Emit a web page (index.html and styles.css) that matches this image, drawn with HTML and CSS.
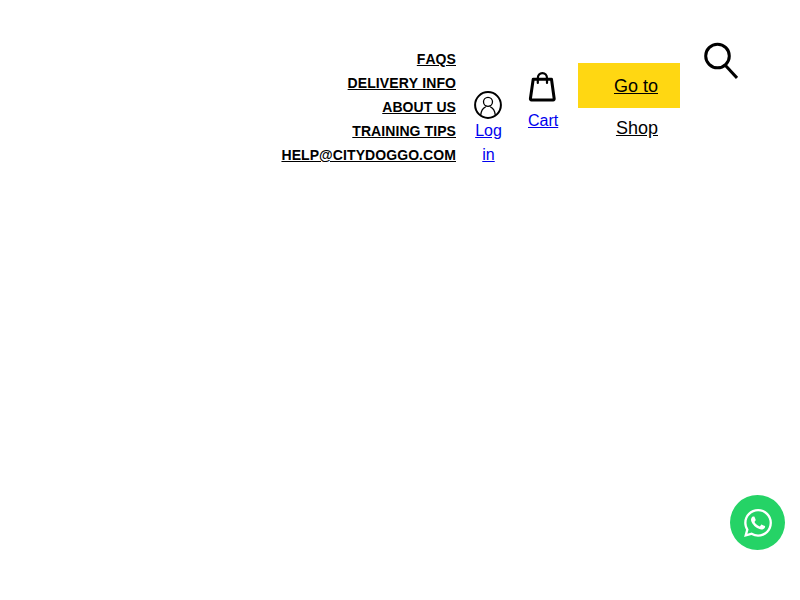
FILE: index.html
```html
<!DOCTYPE html>
<html lang="en">
<head>
<meta charset="utf-8">
<title>City Doggo</title>
<link rel="stylesheet" href="styles.css">
</head>
<body>
<header class="header">
  <ul class="links">
    <li><a href="#">FAQS</a></li>
    <li><a href="#">DELIVERY INFO</a></li>
    <li><a href="#">ABOUT US</a></li>
    <li><a href="#">TRAINING TIPS</a></li>
    <li><a href="#">HELP@CITYDOGGO.COM</a></li>
  </ul>
  <div class="account">
    <svg class="account-icon" viewBox="0 0 28 28" fill="none" stroke="#000">
      <circle cx="14" cy="14" r="12.9" stroke-width="2"/>
      <circle cx="14" cy="10.800" r="4.500" stroke-width="1.300"/>
      <path d="M6.800 23.600c.4-3.800 2.200-6.400 4.600-7.600M21.200 23.600c-.4-3.800-2.200-6.400-4.600-7.600" stroke-width="1.300" stroke-linecap="round"/>
    </svg>
    <a href="#">Log in</a>
  </div>
  <div class="cart">
    <svg class="cart-icon" viewBox="0 0 30 30" fill="none" stroke="#000" stroke-linecap="round" stroke-linejoin="round">
      <path d="M5.200 7.200h18.300l2.700 19.600c.1.700-.3 1.200-1 1.200H3.400c-.7 0-1.100-.5-1-1.200z" stroke-width="3"/>
      <path d="M9.800 11V6.200C9.800 3.200 11.700 1.200 14.400 1.200s4.600 2 4.600 5V11" stroke-width="2.200"/>
    </svg>
    <a href="#">Cart</a>
  </div>
  <div class="shop"><a href="#">Go to Shop</a></div>
  <svg class="search" viewBox="0 0 34 38" fill="none" stroke="#000" stroke-width="3">
    <circle cx="13.500" cy="14" r="11.800"/>
    <path d="M21.500 23.500L33 36" />
  </svg>
</header>
<a class="whatsapp" href="#" aria-label="WhatsApp">
  <svg class="whatsapp-icon" viewBox="0 0 24 24" fill="#fff">
    <path d="M17.472 14.382c-.297-.149-1.758-.867-2.03-.967-.273-.099-.471-.148-.67.15-.197.297-.767.966-.94 1.164-.173.199-.347.223-.644.075-.297-.15-1.255-.463-2.39-1.475-.883-.788-1.48-1.761-1.653-2.059-.173-.297-.018-.458.13-.606.134-.133.298-.347.446-.52.149-.174.198-.298.298-.497.099-.198.05-.371-.025-.52-.075-.149-.669-1.612-.916-2.207-.242-.579-.487-.5-.669-.51-.173-.008-.371-.01-.57-.01-.198 0-.52.074-.792.372-.272.297-1.04 1.016-1.04 2.479 0 1.462 1.065 2.875 1.213 3.074.149.198 2.096 3.2 5.077 4.487.709.306 1.262.489 1.694.625.712.227 1.36.195 1.871.118.571-.085 1.758-.719 2.006-1.413.248-.694.248-1.289.173-1.413-.074-.124-.272-.198-.57-.347m-5.421 7.403h-.004a9.87 9.87 0 01-5.031-1.378l-.361-.214-3.741.982.998-3.648-.235-.374a9.86 9.86 0 01-1.51-5.26c.001-5.45 4.436-9.884 9.888-9.884 2.64 0 5.122 1.03 6.988 2.898a9.825 9.825 0 012.893 6.994c-.003 5.45-4.437 9.884-9.885 9.884m8.413-18.297A11.815 11.815 0 0012.05 0C5.495 0 .16 5.335.157 11.892c0 2.096.547 4.142 1.588 5.945L.057 24l6.305-1.654a11.882 11.882 0 005.683 1.448h.005c6.554 0 11.89-5.335 11.893-11.893a11.821 11.821 0 00-3.48-8.413Z"/>
  </svg>
</a>
</body>
</html>
```
FILE: styles.css
```css
* { box-sizing: border-box; }
html, body { margin: 0; height: 100%; background: #fff; }
body { font-family: "Liberation Sans", Arial, sans-serif; font-size: 16px; line-height: 24px; font-kerning: none; }
svg { display: block; }

.header {
  display: flex;
  align-items: flex-start;
  justify-content: flex-end;
  padding: 42px 62px 0 0;
}

.links {
  list-style: none;
  margin: 5px 18px 0 0;
  padding: 0;
  text-align: right;
  font-size: 14px;
  font-weight: 700;
  letter-spacing: .08px;
}
.links a { color: #000; }

.account {
  width: 29px;
  margin: 49px 25px 0 0;
  text-align: center;
}
.account-icon { width: 28px; height: 28px; }
.account a, .cart a { color: #00e; }

.cart {
  width: 30px;
  margin: 30px 20px 0 0;
  text-align: center;
}
.cart-icon { width: 30px; height: 30px; margin-bottom: 7px; }

.shop {
  width: 102px;
  height: 45px;
  margin: 21px 24px 0 0;
  padding: 2px 22px 0 34px;
  background: #ffd712;
  font-size: 18px;
  line-height: 42px;
  text-align: right;
}
.shop a { color: #000; }

.search { width: 34px; height: 38px; }

.whatsapp {
  position: fixed;
  left: 730px;
  top: 495px;
  width: 55px;
  height: 55px;
  display: flex;
  align-items: center;
  justify-content: center;
  border-radius: 50%;
  background: #25d366;
}
.whatsapp-icon { width: 28px; height: 28px; }
```
